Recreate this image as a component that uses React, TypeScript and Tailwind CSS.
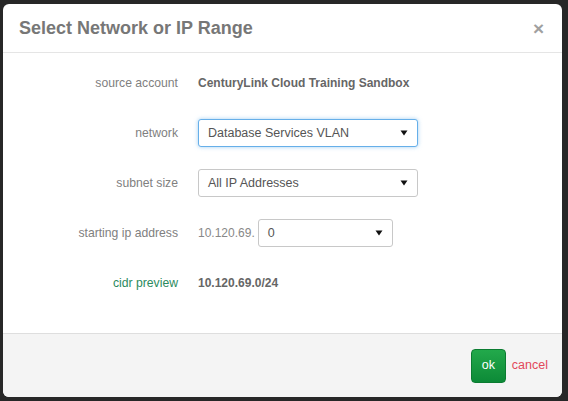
import React from "react"

function Caret() {
  return (
    <svg width="8" height="6" viewBox="0 0 8 6" className="shrink-0">
      <path d="M0.5 0.5 L7.5 0.5 L4 5.5 Z" fill="#111" />
    </svg>
  )
}

function FakeSelect({ value, focused, width }: { value: string; focused?: boolean; width: string }) {
  return (
    <div
      className={`${width} h-[28px] flex items-center justify-between pl-[9px] pr-[9px] rounded-[3px] bg-white border text-[12.5px] text-[#555] ${
        focused ? "border-[#66afe9] shadow-[0_0_4px_rgba(102,175,233,0.6)]" : "border-[#c8c8c8]"
      }`}
    >
      <span>{value}</span>
      <Caret />
    </div>
  )
}

function Row({ label, labelClass, children }: { label: string; labelClass?: string; children: React.ReactNode }) {
  return (
    <div className="flex items-center h-[28px]">
      <div className={`w-[175px] text-right text-[12.2px] ${labelClass ?? "text-[#808080]"}`}>{label}</div>
      <div className="pl-[20px] flex items-center">{children}</div>
    </div>
  )
}

export default function App() {
  return (
    <div
      className="w-[568px] h-[401px] bg-[#272727] pt-[4px] pl-[3px]"
      style={{ fontFamily: '"Liberation Sans", Arial, sans-serif' }}
    >
      <div className="w-[559px] h-[393px] bg-white rounded-[6px] flex flex-col overflow-hidden">
        <div className="h-[49px] flex items-center justify-between pl-[16px] pr-[18px] border-b border-[#e5e5e5]">
          <h3 className="text-[18px] font-bold text-[#777]">Select Network or IP Range</h3>
          <span className="text-[19px] font-bold text-[#a0a0a0] leading-none">×</span>
        </div>
        <div className="flex-1 flex flex-col gap-[22px] pt-[16px]">
          <Row label="source account">
            <span className="text-[12px] font-bold text-[#666]">CenturyLink Cloud Training Sandbox</span>
          </Row>
          <Row label="network">
            <FakeSelect value="Database Services VLAN" focused width="w-[220px]" />
          </Row>
          <Row label="subnet size">
            <FakeSelect value="All IP Addresses" width="w-[220px]" />
          </Row>
          <Row label="starting ip address">
            <span className="text-[12px] text-[#888] mr-[3px]">10.120.69.</span>
            <FakeSelect value="0" width="w-[135px]" />
          </Row>
          <Row label="cidr preview" labelClass="text-[#2b8a5e]">
            <span className="text-[12px] font-bold text-[#666]">10.120.69.0/24</span>
          </Row>
        </div>
        <div className="h-[64px] bg-[#f4f4f4] border-t border-[#dedede] flex items-center justify-end pr-[14px]">
          <button className="w-[35px] h-[34px] rounded-[4px] bg-gradient-to-b from-[#22a94b] to-[#0c8a37] border border-[#0b7c31] text-white text-[12.5px] mr-[6px]">
            ok
          </button>
          <span className="text-[12.5px] text-[#e2485a]">cancel</span>
        </div>
      </div>
    </div>
  )
}
